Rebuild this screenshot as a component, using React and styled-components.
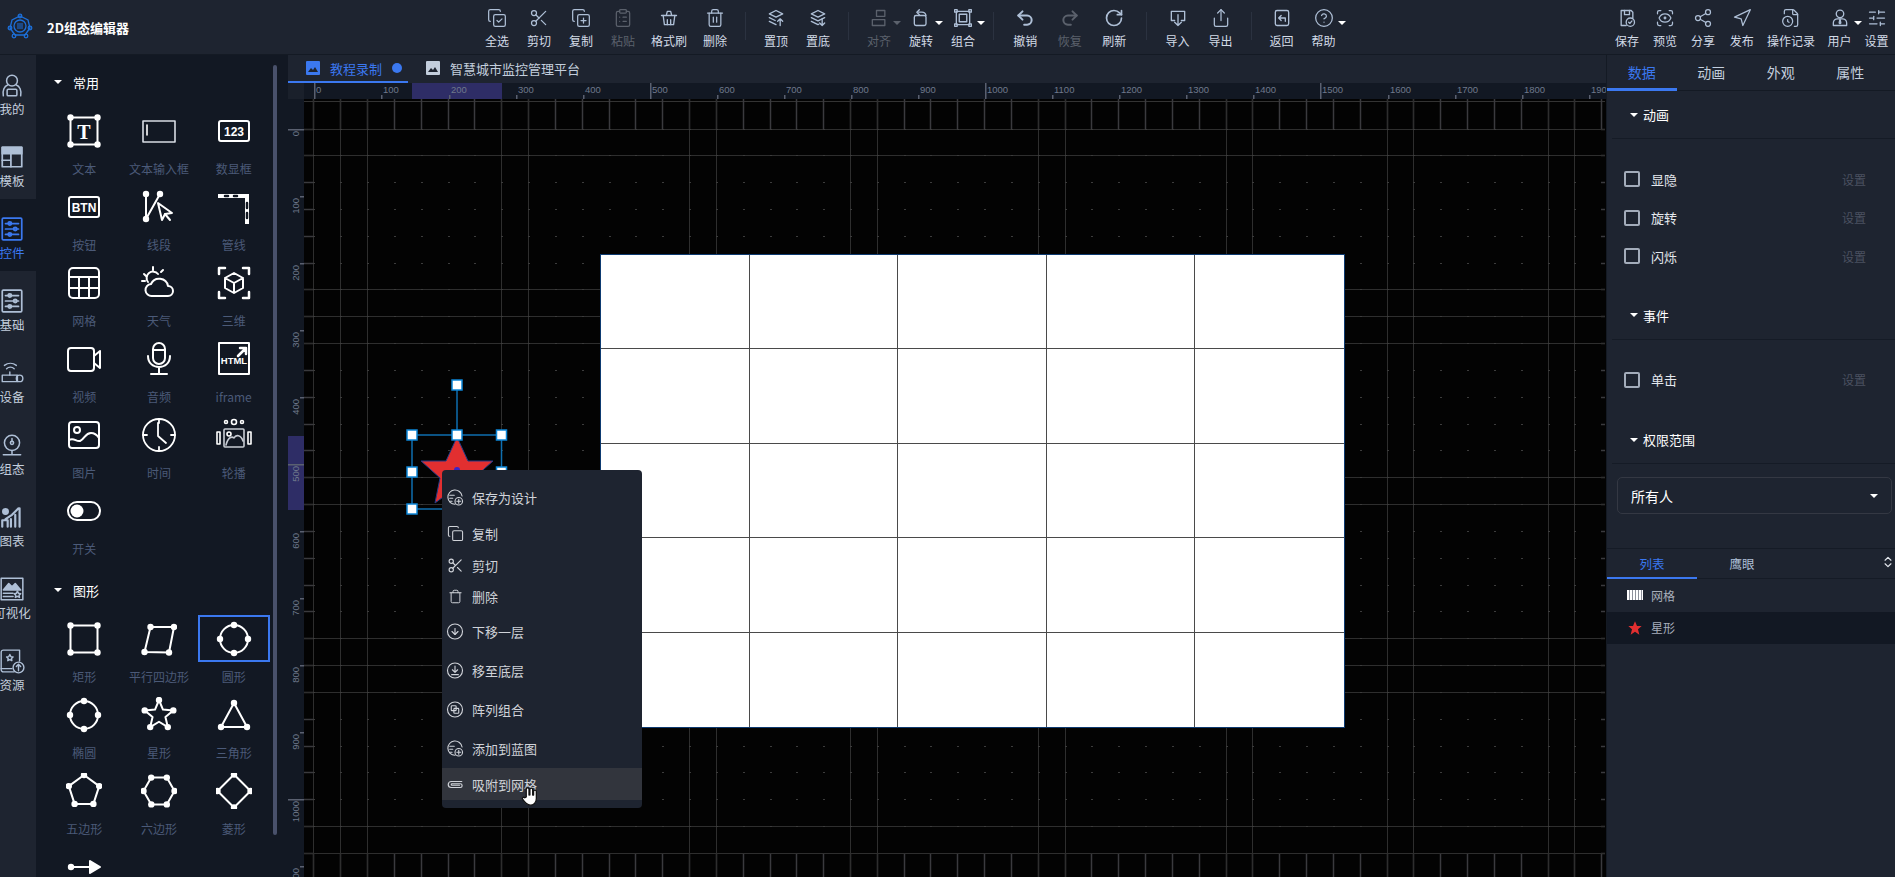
import React from "react";
import styled, { createGlobalStyle } from "styled-components";
import {
  CopyCheck, Scissors, CopyPlus, ClipboardList, Trash2, Undo2, Redo2, RotateCw, Share as ShareUp,
  CircleHelp, ScanEye, Share2, Navigation, FileClock, SlidersHorizontal, Copy, Trash, CircleArrowDown,
  ChevronsUpDown,
} from "lucide-react";

const GlobalStyle = createGlobalStyle`
  * { box-sizing: border-box; margin: 0; padding: 0; }
  html, body { width: 100%; height: 100%; overflow: hidden; background: #1e2430; }
  body { font-family: "Noto Sans CJK SC", "Noto Sans", sans-serif; }
`;

const BAR = "#1e2430";
const DARK = "#121823";
const BLUE = "#3b78f0";

const Page = styled.div`
  width: 1895px;
  height: 877px;
  display: flex;
  flex-direction: column;
  overflow: hidden;
`;

/* top bar */
const Header = styled.header`
  height: 55px;
  flex: none;
  display: flex;
  background: ${BAR};
  border-bottom: 1px solid #141a24;
`;
const Brand = styled.div`
  width: 476px;
  flex: none;
  display: flex;
  align-items: center;
  gap: 14px;
  padding-left: 7px;
`;
const BrandName = styled.span`
  color: #fff;
  font-size: 13px;
  font-weight: 700;
`;
const Tools = styled.div`
  flex: 1;
  display: flex;
`;
const RightTools = styled.div`
  width: 287px;
  flex: none;
  display: flex;
`;
const ToolItem = styled.div`
  position: relative;
  width: ${(p) => p.$w || 42}px;
  flex: none;
  display: flex;
  flex-direction: column;
  align-items: center;
  padding-top: 8px;
  color: ${(p) => (p.$off ? "#5b616c" : "#aebfd6")};
`;
const ToolIcon = styled.div`
  height: 20px;
  display: flex;
  align-items: center;
  justify-content: center;
`;
const ToolLabel = styled.span`
  margin-top: 5px;
  font-size: 12px;
  line-height: 16px;
  white-space: nowrap;
  color: ${(p) => (p.$off ? "#5b616c" : "#d3dbe7")};
`;
const Caret = styled.i`
  display: block;
  width: 0;
  height: 0;
  border-left: 4px solid transparent;
  border-right: 4px solid transparent;
  border-top: 4px solid ${(p) => p.$c || "#fff"};
`;
const ToolCaret = styled.span`
  position: absolute;
  top: 21px;
  left: calc(50% + 14px);
`;
const ToolDivider = styled.div`
  width: 1px;
  height: 28px;
  margin: 12px 9px 0;
  flex: none;
  background: #2b3240;
`;

/* body */
const Body = styled.div`
  flex: 1;
  display: flex;
  min-height: 0;
`;
const Rail = styled.nav`
  width: 36px;
  flex: none;
  background: ${BAR};
  overflow: hidden;
`;
const RailItem = styled.div`
  height: 72px;
  width: 36px;
  padding-top: 17px;
  background: ${(p) => (p.$on ? DARK : "transparent")};
  color: ${(p) => (p.$on ? BLUE : "#aebfd6")};
`;
const RailInner = styled.div`
  width: 24px;
  display: flex;
  flex-direction: column;
  align-items: center;
`;
const RailLabel = styled.span`
  margin-top: 2px;
  font-size: 12.5px;
  line-height: 18px;
  white-space: nowrap;
  color: ${(p) => (p.$on ? BLUE : "#c3cedd")};
`;

const Panel = styled.aside`
  position: relative;
  width: 252px;
  flex: none;
  background: ${DARK};
  padding: 13px 0 0 11px;
  overflow: hidden;
`;
const Thumb = styled.div`
  position: absolute;
  left: 237px;
  top: 10px;
  width: 4px;
  height: 770px;
  border-radius: 2px;
  background: #49516b;
`;
const GroupHead = styled.div`
  height: 28px;
  display: flex;
  align-items: center;
  gap: 11px;
  padding-left: 7px;
  margin-top: ${(p) => p.$mt || 0}px;
  color: #fff;
  font-size: 13px;
`;
const WidgetGrid = styled.div`
  display: grid;
  grid-template-columns: repeat(3, 74.67px);
  grid-auto-rows: 76px;
  margin-top: 11px;
`;
const Widget = styled.div`
  display: flex;
  flex-direction: column;
  align-items: center;
`;
const WidgetIcon = styled.div`
  width: 72px;
  height: 47px;
  display: flex;
  align-items: center;
  justify-content: center;
  border: 2px solid ${(p) => (p.$on ? BLUE : "transparent")};
`;
const WidgetLabel = styled.span`
  margin-top: 7px;
  font-size: 12px;
  line-height: 16px;
  color: #4b5a78;
`;

/* centre */
const Center = styled.main`
  width: 1318px;
  flex: none;
  display: flex;
  flex-direction: column;
  min-height: 0;
`;
const DocTabs = styled.div`
  height: 28px;
  flex: none;
  display: flex;
  background: ${BAR};
`;
const DocTab = styled.div`
  width: ${(p) => p.$w}px;
  display: flex;
  align-items: center;
  gap: 10px;
  padding-left: 18px;
  font-size: 13px;
  color: ${(p) => (p.$on ? BLUE : "#c3cedd")};
  border-bottom: 2px solid ${(p) => (p.$on ? BLUE : "transparent")};
`;
const Dot = styled.i`
  width: 10px;
  height: 10px;
  border-radius: 50%;
  background: ${BLUE};
`;
const RulerRow = styled.div`
  height: 16px;
  flex: none;
  display: flex;
  background: ${DARK};
`;
const Corner = styled.div`
  width: 16px;
  background: #1a202b;
`;
const WorkRow = styled.div`
  flex: 1;
  display: flex;
  min-height: 0;
`;
const LeftRuler = styled.div`
  width: 16px;
  flex: none;
  background: ${DARK};
`;
const Canvas = styled.div`
  position: relative;
  flex: 1;
  background: #030303;
  overflow: hidden;
`;
const Layer = styled.svg`
  position: absolute;
  left: 0;
  top: 0;
  display: block;
`;
const RulerSvg = styled.svg`
  display: block;
`;
const Sheet = styled.div`
  position: absolute;
  left: 296px;
  top: 155px;
  width: 745px;
  height: 474px;
  display: grid;
  grid-template-columns: repeat(5, 1fr);
  grid-template-rows: repeat(5, 1fr);
  background: #fff;
  border: 1px solid #0d3a70;
`;
const SheetCell = styled.div`
  border-right: 1px solid #4a4a4a;
  border-bottom: 1px solid #4a4a4a;
  &:nth-child(5n) { border-right: 0; }
  &:nth-last-child(-n + 5) { border-bottom: 0; }
`;
const Menu = styled.div`
  position: absolute;
  left: 138px;
  top: 371px;
  width: 200px;
  height: 338px;
  padding: 8px 0;
  border-radius: 4px;
  background: ${BAR};
  color: #d0d3d9;
`;
const MenuRow = styled.div`
  height: ${(p) => p.$h}px;
  display: flex;
  align-items: center;
  gap: 8px;
  padding-left: 4px;
  font-size: 13px;
  background: ${(p) => (p.$on ? "#32353d" : "transparent")};
`;
const MenuIcon = styled.span`
  width: 18px;
  height: 18px;
  display: flex;
  align-items: center;
  justify-content: center;
  flex: none;
`;
const Pointer = styled.svg`
  position: absolute;
  left: 214px;
  top: 685px;
`;

/* right side */
const Side = styled.aside`
  flex: 1;
  min-width: 0;
  background: ${BAR};
  border-left: 1px solid #141a24;
`;
const SideTabs = styled.div`
  height: 36px;
  display: flex;
  border-bottom: 1px solid #141a24;
`;
const SideTab = styled.div`
  width: 69.5px;
  display: flex;
  align-items: center;
  justify-content: center;
  font-size: 14px;
  color: ${(p) => (p.$on ? BLUE : "#c3cedd")};
  border-bottom: 3px solid ${(p) => (p.$on ? BLUE : "transparent")};
  margin-bottom: -1px;
`;
const SectionHead = styled.div`
  height: 48px;
  margin: ${(p) => p.$mt || 0}px 0 0 5px;
  display: flex;
  align-items: center;
  gap: 5px;
  padding-left: 18px;
  color: #fff;
  font-size: 13px;
  border-bottom: 1px solid #151b26;
`;
const Options = styled.div`
  padding-top: ${(p) => p.$pt}px;
`;
const OptionRow = styled.div`
  height: 38.5px;
  display: flex;
  align-items: center;
  padding: 0 29px 0 17px;
  color: #e4e8ee;
  font-size: 13px;
`;
const Check = styled.i`
  width: 16px;
  height: 16px;
  margin-right: 11px;
  border: 2px solid #a3acba;
  border-radius: 2px;
`;
const SetLink = styled.span`
  margin-left: auto;
  color: #4b5160;
  font-size: 12px;
`;
const Select = styled.div`
  height: 37px;
  margin: 13px 3px 0 10px;
  display: flex;
  align-items: center;
  justify-content: space-between;
  padding: 0 13px;
  border: 1px solid #343843;
  border-radius: 5px;
  color: #fff;
  font-size: 14px;
`;
const ListTabs = styled.div`
  position: relative;
  height: 31px;
  margin-top: 34px;
  display: flex;
  border-top: 1px solid #151b26;
  border-bottom: 1px solid #151b26;
`;
const ListTab = styled.div`
  width: 90px;
  display: flex;
  align-items: center;
  justify-content: center;
  font-size: 12.5px;
  color: ${(p) => (p.$on ? BLUE : "#aebfd6")};
  border-bottom: 2px solid ${(p) => (p.$on ? BLUE : "transparent")};
  margin-bottom: -1px;
`;
const Sorter = styled.span`
  position: absolute;
  right: 0;
  top: 6px;
  color: #e4e8ee;
  display: flex;
`;
const LayerRow = styled.div`
  height: 32.5px;
  display: flex;
  align-items: center;
  gap: 8px;
  padding-left: 20px;
  font-size: 12px;
  color: #a7aebb;
  background: ${(p) => (p.$on ? DARK : "transparent")};
`;
const LayerThumb = styled.span`
  width: 16px;
  height: 10px;
  display: flex;
  justify-content: space-between;
  background: repeating-linear-gradient(90deg, #fff 0 2px, #8c909a 2px 3px);
`;

/* small svg helper for stroked 24 box icons */
const Ico = ({ size = 20, sw = 1.6, fill = "none", children }) => (
  <svg width={size} height={size} viewBox="0 0 24 24" fill={fill} stroke="currentColor" strokeWidth={sw} strokeLinecap="round" strokeLinejoin="round">
    {children}
  </svg>
);

const Logo = () => (
  <svg width="26" height="28" viewBox="0 0 26 28" fill="none" stroke="#1d6fd8" strokeWidth="1.3">
    <path d="M13 3l8 4 2 8-5 7H8l-5-7 2-8z" />
    <circle cx="13" cy="3" r="1.8" />
    <circle cx="3" cy="15" r="1.8" />
    <circle cx="23" cy="15" r="1.8" />
    <circle cx="7" cy="23" r="1.8" />
    <circle cx="19" cy="23" r="1.8" />
    <circle cx="13" cy="13" r="6" />
    <path d="M11 10v6M15 10v6M13 10v6" strokeWidth="1" />
  </svg>
);

const toolIcons = {
  basket: <Ico><path d="M9 8l1-4h4l1 4" /><path d="M3 9h18" /><path d="M5 9l1.5 11h11L19 9" /><path d="M10 14v6M14 14v6" /></Ico>,
  top: <Ico><path d="M12 3l8 4-8 4-8-4z" /><path d="M4 11.5l7 3.5" /><path d="M4 16l8 4" /><path d="M17 21v-8M14 16l3-3 3 3" /></Ico>,
  bottom: <Ico><path d="M12 3l8 4-8 4-8-4z" /><path d="M4 11.5l8 4 8-4" /><path d="M4 16l8 4 1-.5" /><path d="M17 13v8M14 18l3 3 3-3" /></Ico>,
  align: <Ico><rect x="9" y="3" width="10" height="7" /><rect x="4" y="14" width="15" height="7" /></Ico>,
  rotate: <Ico><rect x="4" y="9" width="14" height="12" rx="2" /><path d="M8 5h5a5 5 0 0 1 5 4" /><path d="M10 2L7 5l3 3" /></Ico>,
  group: <Ico><rect x="4" y="4" width="16" height="16" /><rect x="7.5" y="7.5" width="9" height="9" /><rect x="2" y="2" width="3" height="3" /><rect x="19" y="2" width="3" height="3" /><rect x="2" y="19" width="3" height="3" /><rect x="19" y="19" width="3" height="3" /></Ico>,
  importBox: <Ico><path d="M8 15H4V4h16v11h-4" /><path d="M12 8v13M8 17l4 4 4-4" /></Ico>,
  back: <Ico><rect x="4" y="3" width="16" height="18" rx="2" /><path d="M8 12h8v4M8 12l3-3M8 12l3 3" /></Ico>,
  save: <Ico><path d="M11 21H5V3h12l2 2v7" /><path d="M9 3v5h6V3" /><circle cx="16" cy="17" r="5" /><path d="M14 17l1.500 1.500 2.500-3" /></Ico>,
  user: <Ico><circle cx="12" cy="7" r="4.500" /><path d="M4 21v-3a5 5 0 0 1 5-5h6a5 5 0 0 1 5 5v3z" /><path d="M12 13l-1 5 1 1 1-1z" /></Ico>,
};

const railIcons = {
  mine: <Ico size={26} sw={1.4}><circle cx="12" cy="8" r="5" /><path d="M4 22c-1-5 1-9 4-10M20 22c1-5-1-9-4-10" /><rect x="7.500" y="16" width="9" height="6" rx="1" /></Ico>,
  tpl: <Ico size={26} sw={1.6}><rect x="3" y="3" width="18" height="18" /><rect x="3" y="3" width="18" height="6" fill="currentColor" /><path d="M3 15h8M11 9v12" /></Ico>,
  ctrl: <Ico size={26} sw={1.6}><rect x="3" y="2" width="18" height="20" rx="1" /><path d="M6 7h12M6 12h12M6 17h12" /><circle cx="10" cy="7" r="1.500" /><circle cx="15" cy="12" r="1.500" /><circle cx="10" cy="17" r="1.500" /></Ico>,
  dev: <Ico size={26} sw={1.3}><rect x="3" y="14" width="14" height="6" /><circle cx="19" cy="17" r="3" /><path d="M7 8a5 5 0 0 1 7 0M5 5a9 9 0 0 1 11 0M10 11v3" /></Ico>,
  cfg: <Ico size={26} sw={1.4}><circle cx="12" cy="10" r="7" /><circle cx="12" cy="10" r="1.500" /><path d="M12 6v3M4 21h16M12 17v4" /></Ico>,
  chart: <Ico size={26} sw={1.4}><circle cx="6" cy="7" r="2.500" fill="currentColor" /><path d="M3 21v-6h5v6M11 21v-7M15 21v-11M19 21V4M6 14l6-4 6-6" strokeWidth="2" /></Ico>,
  vis: <Ico size={26} sw={1.4}><rect x="2" y="2" width="20" height="20" /><path d="M4 13l5-6 3 3 3-3 5 6z" fill="currentColor" /><path d="M4 16h9M4 19h9" /><path d="M17 14l1 2 2 .3-1.500 1.500.4 2-1.900-1-1.900 1 .4-2L14 16.300l2-.3z" /></Ico>,
  res: <Ico size={26} sw={1.3}><path d="M14 22H4a2 2 0 0 1-2-2V4a2 2 0 0 1 2-2h15v10" /><path d="M2 19h10" /><path d="M10 6l1 2 2 .3-1.500 1.400.4 2-1.900-1-1.900 1 .4-2L7 8.300 9 8z" /><circle cx="18" cy="18" r="5" /><path d="M18 21v-6M16 17l2-2 2 2" /></Ico>,
};

/* panel icons, 36 box, white strokes with vertex dots */
const Svg36 = ({ children, sw = 2 }) => (
  <svg width="36" height="36" viewBox="0 0 36 36" fill="none" stroke="#fff" strokeWidth={sw} strokeLinecap="round" strokeLinejoin="round">
    {children}
  </svg>
);
const Nodes = ({ pts }) => pts.map(([x, y], i) => <circle key={i} cx={x} cy={y} r="3.2" fill="#fff" stroke="none" />);
const Poly = ({ pts, dots }) => (
  <Svg36>
    <polygon points={pts.map((p) => p.join(",")).join(" ")} />
    <Nodes pts={dots || pts} />
  </Svg36>
);
const ring = (n, r, start) =>
  Array.from({ length: n }, (_, i) => {
    const a = ((start + (360 / n) * i) * Math.PI) / 180;
    return [+(18 + r * Math.cos(a)).toFixed(1), +(18 + r * Math.sin(a)).toFixed(1)];
  });
const starPts = ring(10, 15, -90).map((p, i) => (i % 2 ? [18 + (p[0] - 18) * 0.45, 18 + (p[1] - 18) * 0.45] : p));
const Badge = ({ text }) => (
  <Svg36>
    <rect x="3" y="8" width="30" height="20" rx="2" />
    <text x="18" y="22.500" textAnchor="middle" fill="#fff" stroke="none" fontSize="12" fontWeight="700" fontFamily="Liberation Sans, sans-serif">{text}</text>
  </Svg36>
);

const RoundShape = () => (
  <Svg36>
    <circle cx="18" cy="18" r="14" />
    <Nodes pts={[[18, 4], [32, 18], [18, 32], [4, 18]]} />
  </Svg36>
);

const common = [
  ["文本", <Svg36><rect x="4.500" y="4.500" width="27" height="27" /><Nodes pts={[[4.500, 4.500], [31.500, 4.500], [4.500, 31.500], [31.500, 31.500]]} /><text x="18" y="26" textAnchor="middle" fill="#fff" stroke="none" fontSize="20" fontWeight="700" fontFamily="Liberation Serif, serif">T</text></Svg36>],
  ["文本输入框", <Svg36 sw={1.600}><rect x="2" y="8" width="32" height="21" stroke="#d8dce4" /><path d="M6 12v10" /></Svg36>],
  ["数显框", <Badge text="123" />],
  ["按钮", <Badge text="BTN" />],
  ["线段", <Svg36><path d="M5 30L19 5M5 5v25" /><Nodes pts={[[5, 5], [19, 5], [5, 30]]} /><path d="M17 14l4 17 3-6 7-1z" fill="#121823" /><path d="M24 25l5 6" /></Svg36>],
  ["管线", <Svg36><path d="M2 5h31v30h-4V9H2z" fill="#fff" stroke="none" /><path d="M9 7h3M18 7h3M31 14v5M31 24v5" stroke="#121823" strokeWidth="2.500" /></Svg36>],
  ["网格", <Svg36><rect x="3" y="3" width="30" height="30" rx="4" /><path d="M3 12h30M3 23h30M13 12v21M23 12v21" /></Svg36>],
  ["天气", <Svg36><path d="M11 31a6 6 0 0 1-1-12 9 9 0 0 1 17 2 5 5 0 0 1 0 10z" /><path d="M7 17a6 6 0 0 1 10-8M12 2v3M3 9l2 2M1 16h3M22 5l-2 2" /></Svg36>],
  ["三维", <Svg36><path d="M18 8l9 5v10l-9 5-9-5V13zM9 13l9 5 9-5M18 18v10" /><path d="M3 9V3h6M27 3h6v6M33 27v6h-6M9 33H3v-6" strokeWidth="2.500" /></Svg36>],
  ["视频", <Svg36><rect x="2" y="7" width="26" height="23" rx="3" /><path d="M28 15l6-5v17l-6-5" /></Svg36>],
  ["音频", <Svg36><rect x="12" y="2" width="12" height="21" rx="6" /><path d="M12 9h12" /><path d="M7 15c0 7 5 11 11 11s11-4 11-11M18 26v7M10 33h16" /></Svg36>],
  ["iframe", <Svg36><rect x="3" y="2" width="30" height="31" /><path d="M22 15l8-8M24 7h6v6" strokeWidth="2.500" /><text x="18" y="23" textAnchor="middle" fill="#fff" stroke="none" fontSize="9.500" fontWeight="700" fontFamily="Liberation Sans, sans-serif">HTML</text></Svg36>],
  ["图片", <Svg36><rect x="3" y="5" width="30" height="26" rx="3" /><circle cx="11" cy="13" r="3" /><path d="M3 23c5-3 7 2 11 1 5-2 5-8 11-8 3 0 6 2 8 5" /></Svg36>],
  ["时间", <Svg36 sw={1.800}><circle cx="18" cy="18" r="16" /><path d="M18 2v4M18 30v4M2 18h4M30 18h4M17 6v13l8 7" /></Svg36>],
  ["轮播", <Svg36 sw={1.600}><rect x="8" y="12" width="20" height="18" rx="1" stroke="#c8ccd4" /><path d="M10 28c2-8 6-9 8-7 2-4 7-3 9 3" stroke="#c8ccd4" /><circle cx="13" cy="17" r="2" /><rect x="1" y="15" width="3" height="12" /><rect x="32" y="15" width="3" height="12" /><circle cx="10" cy="5" r="1.500" /><circle cx="18" cy="5" r="2.500" /><circle cx="26" cy="5" r="1.500" /></Svg36>],
  ["开关", <Svg36><rect x="2" y="9" width="32" height="18" rx="9" /><circle cx="11" cy="18" r="6.500" fill="#fff" stroke="none" /></Svg36>],
];

const shapes = [
  ["矩形", <Poly pts={[[4.500, 4.500], [31.500, 4.500], [31.500, 31.500], [4.500, 31.500]]} />],
  ["平行四边形", <Poly pts={[[9.500, 6], [33, 6], [28, 31.500], [3.500, 31]]} />],
  ["圆形", <RoundShape />, true],
  ["椭圆", <RoundShape />],
  ["星形", <Poly pts={starPts} dots={ring(5, 15, -90)} />],
  ["三角形", <Poly pts={[[18, 6], [31, 30], [5, 30]]} />],
  ["五边形", <Poly pts={ring(5, 16, -90)} />],
  ["六边形", <Poly pts={ring(6, 15.500, 0)} />],
  ["菱形", <Poly pts={ring(4, 16.500, -90)} />],
  ["", <Svg36><path d="M5 18h20" /><circle cx="5" cy="18" r="3.200" fill="#fff" stroke="none" /><path d="M24 12l10 6-10 6z" fill="#fff" /></Svg36>],
];

/* canvas drawings */
const STEP = 26.83;
const GX = (i) => Math.round(9.4 + STEP * i) + 0.5;
const GY = (j) => Math.round(29.5 + STEP * j) + 0.5;
const W = 1301;
const H = 778;
const range = (n) => Array.from({ length: n }, (_, i) => i);
const fullX = [0, 1, 2, 7, 8, 14, 15, 20, 21, 27, 28, 34, 35, 40, 41, 46, 47];
const fullY = [0, 1, 6, 7, 8, 13, 14, 19, 20, 21, 26, 27];

const GridLayer = () => (
  <Layer width={W} height={H}>
    <path d={`M0 2.500H${W}`} stroke="#333" />
    {range(49).map((i) => (
      <g key={i} stroke="#3a3a3e" strokeWidth="1.500">
        <path d={`M${GX(i)} 0V${GY(0)}`} />
        <path d={`M${GX(i)} ${GY(27)}V${H}`} />
      </g>
    ))}
    {range(28).map((j) => (
      <g key={j} stroke="#3a3a3e" strokeWidth="1.500">
        <path d={`M0 ${GY(j)}H${GX(0)}`} />
        <path d={`M${W - 4} ${GY(j)}H${W}`} />
      </g>
    ))}
    {fullX.map((i) => <path key={i} d={`M${GX(i)} 0V${H}`} stroke="#2e2e2e" />)}
    {fullY.map((j) => <path key={j} d={`M0 ${GY(j)}H${W}`} stroke="#2e2e2e" />)}
    {range(48).map((i) =>
      range(27).map((j) => (
        <rect key={`${i}-${j}`} x={GX(i) - 0.5} y={GY(j) - 0.5} width="2" height="1" fill="#3c3c3c" />
      ))
    )}
  </Layer>
);

const TopRuler = () => (
  <RulerSvg width="1302" height="16">
    <rect x="108" y="0" width="90" height="16" fill="#2e2d66" />
    {range(20).map((k) => {
      const x = Math.round(10.4 + 67.07 * k);
      return (
        <g key={k}>
          <rect x={x} y={k % 5 === 0 ? 0 : 12} width="1.500" height={k % 5 === 0 ? 16 : 4} fill="#5a6070" />
          <text x={x + 2} y="10" fontSize="9.500" fill="#6f788c" fontFamily="Liberation Sans, sans-serif">{k * 100}</text>
        </g>
      );
    })}
  </RulerSvg>
);

const SideRuler = () => (
  <RulerSvg width="16" height="778">
    <rect x="0" y="337" width="16" height="74" fill="#2e2d66" />
    {range(12).map((k) => {
      const y = Math.round(30 + 67 * k);
      return (
        <g key={k}>
          <rect x={k % 5 === 0 ? 0 : 12} y={y} width={k % 5 === 0 ? 16 : 4} height="1.500" fill="#5a6070" />
          <text transform={`translate(10.500 ${y + 2}) rotate(-90)`} textAnchor="end" fontSize="9.500" fill="#6f788c" fontFamily="Liberation Sans, sans-serif">{k * 100}</text>
        </g>
      );
    })}
  </RulerSvg>
);

const Handle = ({ x, y }) => <rect x={x - 5} y={y - 5} width="10" height="10" fill="#fff" stroke="#0d86d7" strokeWidth="1.500" />;

const Selection = () => (
  <Layer width={W} height={H}>
    <polygon points="153,338 164,362 189,362 170,379 179,404 153,388 131,404 136,379 117,362 142,362" fill="#e22f30" stroke="#233b86" strokeWidth="1" />
    <circle cx="153" cy="371" r="3" fill="#3a25c8" />
    <g fill="none" stroke="#0f6fb0" strokeWidth="1.500">
      <rect x="108" y="336" width="89.500" height="74" />
      <path d="M153 286v50" />
    </g>
    <Handle x={153} y={286} />
    <Handle x={108} y={336} />
    <Handle x={153} y={336} />
    <Handle x={197.500} y={336} />
    <Handle x={108} y={373} />
    <Handle x={197.500} y={373} />
    <Handle x={108} y={410} />
  </Layer>
);

const MiniImage = ({ color }) => (
  <svg width="14" height="14" viewBox="0 0 14 14">
    <rect width="14" height="14" rx="1" fill={color} />
    <path d="M2 11l3-4 2 2 2-3 3 5z" fill="#1e2430" />
  </svg>
);

const GearPlus = () => (
  <Ico size={19} sw={1.500}>
    <path d="M12 21a9.500 9.500 0 1 1 9.400-11" />
    <path d="M5 9h6M5 13h4M5 17h3" />
    <circle cx="17" cy="17" r="5" />
    <path d="M17 14.500v5M14.500 17h5" />
  </Ico>
);

const menuItems = [
  { label: "保存为设计", h: 39, icon: <GearPlus /> },
  { label: "复制", h: 32, icon: <Copy size={17} strokeWidth={1.5} /> },
  { label: "剪切", h: 32, icon: <Scissors size={17} strokeWidth={1.6} /> },
  { label: "删除", h: 31, icon: <Trash size={15} strokeWidth={1.6} /> },
  { label: "下移一层", h: 39, icon: <CircleArrowDown size={19} strokeWidth={1.5} /> },
  { label: "移至底层", h: 39, icon: <Ico size={19} sw={1.500}><circle cx="12" cy="12" r="10" /><path d="M12 6v8M8.500 11l3.500 3.500 3.500-3.500M7.500 17.500h9" /></Ico> },
  { label: "阵列组合", h: 39, icon: <Ico size={19} sw={1.500}><circle cx="12" cy="12" r="10" /><rect x="7" y="7" width="6.500" height="6.500" rx="1" /><rect x="10.500" y="10.500" width="6.500" height="6.500" rx="1" /></Ico> },
  { label: "添加到蓝图", h: 39, icon: <GearPlus /> },
  { label: "吸附到网格", h: 32, on: true, icon: <Ico size={19} sw={1.600}><path d="M21 8H7a4 4 0 0 0 0 8h12a2.500 2.500 0 0 0 0-5H8a1 1 0 0 0 0 2h10" /></Ico> },
];

export default function App() {
  const tool = (label, icon, opts = {}) => (
    <ToolItem key={label} $w={opts.w} $off={opts.off}>
      <ToolIcon>{icon}</ToolIcon>
      <ToolLabel $off={opts.off}>{label}</ToolLabel>
      {opts.caret && <ToolCaret><Caret $c={opts.off ? "#5b616c" : "#fff"} /></ToolCaret>}
    </ToolItem>
  );
  const s = { size: 20, strokeWidth: 1.5 };

  return (
    <Page>
      <GlobalStyle />
      <Header>
        <Brand>
          <Logo />
          <BrandName>2D组态编辑器</BrandName>
        </Brand>
        <Tools>
          {tool("全选", <CopyCheck {...s} />)}
          {tool("剪切", <Scissors {...s} />)}
          {tool("复制", <CopyPlus {...s} />)}
          {tool("粘贴", <ClipboardList {...s} />, { off: true })}
          {tool("格式刷", toolIcons.basket, { w: 50 })}
          {tool("删除", <Trash2 {...s} />)}
          <ToolDivider />
          {tool("置顶", toolIcons.top)}
          {tool("置底", toolIcons.bottom)}
          <ToolDivider />
          {tool("对齐", toolIcons.align, { off: true, caret: true })}
          {tool("旋转", toolIcons.rotate, { caret: true })}
          {tool("组合", toolIcons.group, { caret: true })}
          <ToolDivider />
          {tool("撤销", <Undo2 size={20} strokeWidth={2.4} />, { w: 44.5 })}
          {tool("恢复", <Redo2 size={20} strokeWidth={2.4} />, { w: 44.5, off: true })}
          {tool("刷新", <RotateCw size={20} strokeWidth={2} />, { w: 44.5 })}
          <ToolDivider />
          {tool("导入", toolIcons.importBox, { w: 44 })}
          {tool("导出", <ShareUp {...s} />)}
          <ToolDivider />
          {tool("返回", toolIcons.back)}
          {tool("帮助", <CircleHelp {...s} />, { caret: true })}
        </Tools>
        <RightTools>
          {tool("保存", toolIcons.save, { w: 38 })}
          {tool("预览", <ScanEye {...s} />, { w: 38 })}
          {tool("分享", <Share2 {...s} />, { w: 38 })}
          {tool("发布", <Navigation {...s} />, { w: 39.5 })}
          {tool("操作记录", <FileClock {...s} />, { w: 59 })}
          {tool("用户", toolIcons.user, { w: 38, caret: true })}
          {tool("设置", <SlidersHorizontal {...s} />, { w: 36 })}
        </RightTools>
      </Header>

      <Body>
        <Rail>
          {[
            ["我的", railIcons.mine],
            ["模板", railIcons.tpl],
            ["控件", railIcons.ctrl, true],
            ["基础", railIcons.ctrl],
            ["设备", railIcons.dev],
            ["组态", railIcons.cfg],
            ["图表", railIcons.chart],
            ["可视化", railIcons.vis],
            ["资源", railIcons.res],
          ].map(([label, icon, on]) => (
            <RailItem key={label} $on={on}>
              <RailInner>
                {icon}
                <RailLabel $on={on}>{label}</RailLabel>
              </RailInner>
            </RailItem>
          ))}
        </Rail>

        <Panel>
          <Thumb />
          <GroupHead><Caret />常用</GroupHead>
          <WidgetGrid>
            {common.map(([label, icon]) => (
              <Widget key={label}>
                <WidgetIcon>{icon}</WidgetIcon>
                <WidgetLabel>{label}</WidgetLabel>
              </Widget>
            ))}
          </WidgetGrid>
          <GroupHead $mt={13}><Caret />图形</GroupHead>
          <WidgetGrid>
            {shapes.map(([label, icon, on], i) => (
              <Widget key={i}>
                <WidgetIcon $on={on}>{icon}</WidgetIcon>
                {label && <WidgetLabel>{label}</WidgetLabel>}
              </Widget>
            ))}
          </WidgetGrid>
        </Panel>

        <Center>
          <DocTabs>
            <DocTab $w={120} $on>
              <MiniImage color={BLUE} />
              教程录制
              <Dot />
            </DocTab>
            <DocTab $w={190}>
              <MiniImage color="#c3cedd" />
              智慧城市监控管理平台
            </DocTab>
          </DocTabs>
          <RulerRow>
            <Corner />
            <TopRuler />
          </RulerRow>
          <WorkRow>
            <LeftRuler><SideRuler /></LeftRuler>
            <Canvas>
              <GridLayer />
              <Sheet>
                {range(25).map((i) => <SheetCell key={i} />)}
              </Sheet>
              <Selection />
              <Menu>
                {menuItems.map((m) => (
                  <MenuRow key={m.label} $h={m.h} $on={m.on}>
                    <MenuIcon>{m.icon}</MenuIcon>
                    {m.label}
                  </MenuRow>
                ))}
              </Menu>
              <Pointer width="22" height="24" viewBox="0 0 24 24" fill="#fff" stroke="#111" strokeWidth="1.400" strokeLinejoin="round">
                <path d="M9 13V4.500a1.500 1.500 0 0 1 3 0V11l1-.2V5a1.500 1.500 0 0 1 3 0v6l1-.1V7a1.500 1.500 0 0 1 3 0v8c0 4-3 7-6.500 7S8 20 5 15.500c-1-1.500 1-3 2.500-1.500z" />
              </Pointer>
            </Canvas>
          </WorkRow>
        </Center>

        <Side>
          <SideTabs>
            <SideTab $on>数据</SideTab>
            <SideTab>动画</SideTab>
            <SideTab>外观</SideTab>
            <SideTab>属性</SideTab>
          </SideTabs>
          <SectionHead><Caret />动画</SectionHead>
          <Options $pt={21}>
            {["显隐", "旋转", "闪烁"].map((t) => (
              <OptionRow key={t}><Check />{t}<SetLink>设置</SetLink></OptionRow>
            ))}
          </Options>
          <SectionHead $mt={16}><Caret />事件</SectionHead>
          <Options $pt={21}>
            <OptionRow><Check />单击<SetLink>设置</SetLink></OptionRow>
          </Options>
          <SectionHead $mt={17}><Caret />权限范围</SectionHead>
          <Select>所有人<Caret /></Select>
          <ListTabs>
            <ListTab $on>列表</ListTab>
            <ListTab>鹰眼</ListTab>
            <Sorter><ChevronsUpDown size={14} strokeWidth={2} /></Sorter>
          </ListTabs>
          <LayerRow><LayerThumb />网格</LayerRow>
          <LayerRow $on>
            <svg width="16" height="16" viewBox="0 0 24 24" fill="#e22f30"><path d="M12 2l3 7h7l-5.500 5 2 8-6.500-4.500L5.500 22l2-8L2 9h7z" /></svg>
            星形
          </LayerRow>
        </Side>
      </Body>
    </Page>
  );
}
